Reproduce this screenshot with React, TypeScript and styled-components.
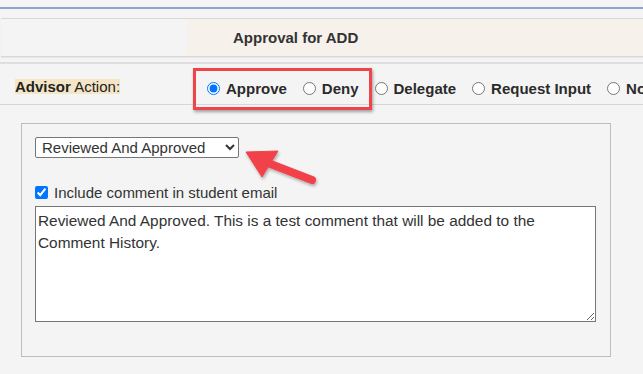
import styled, { createGlobalStyle } from 'styled-components';

const GlobalStyle = createGlobalStyle`
  html, body {
    margin: 0;
    padding: 0;
    background: #f4f4f4;
    font-family: "Liberation Sans", Arial, sans-serif;
    color: #333;
  }
`;

const Page = styled.div`
  position: relative;
  width: 643px;
  height: 374px;
  overflow: hidden;
  padding-top: 7px;
  box-sizing: border-box;
`;

const TopRule = styled.div`
  height: 2px;
  background: #8aa3d0;
`;

const HeaderBand = styled.div`
  margin: 9px 0 0 1px;
  height: 37px;
  display: grid;
  grid-template-columns: 186px 1fr;
  border-top: 1px solid #d8d8d8;
  border-bottom: 1px solid #d8d8d8;
  box-shadow: 0 1px 1px rgba(0, 0, 0, 0.05);
`;

const HeaderCell = styled.div<{ $tint?: boolean }>`
  display: flex;
  align-items: center;
  padding-left: ${p => (p.$tint ? '46px' : '0')};
  background: ${p => (p.$tint ? '#f6f1eb' : 'transparent')};
  font-weight: bold;
  font-size: 15px;
  color: #333;
`;

const Divider = styled.div`
  margin-top: 5px;
  height: 2px;
  background: #dedede;
`;

const ActionRow = styled.div`
  height: 41px;
  box-sizing: border-box;
  padding: 5px 0 0 15px;
  display: grid;
  grid-template-columns: 192px auto;
  align-items: center;
  border-bottom: 1px solid #d6d6d6;
`;

const ActionLabel = styled.span`
  justify-self: start;
  background: #f3e5c5;
  font-size: 15px;
  line-height: 15px;
  white-space: nowrap;
  color: #222;

  b {
    font-weight: bold;
  }
`;

const RadioGroup = styled.div`
  display: flex;
  align-items: center;
  gap: 16px;
  margin-top: 3px;
  white-space: nowrap;
`;

const RadioItem = styled.label`
  display: flex;
  align-items: center;
  gap: 6px;
  font-size: 15px;
  font-weight: bold;
  color: #2b2b2b;

  input {
    margin: 0;
    width: 13px;
    height: 13px;
    accent-color: #0075ff;
  }
`;

const Panel = styled.div`
  margin: 18px 0 0 21px;
  width: 590px;
  height: 234px;
  box-sizing: border-box;
  border: 1px solid #bdbdbd;
  padding: 13px 0 0 13px;
  display: flex;
  flex-direction: column;
  align-items: flex-start;
`;

const ReasonSelect = styled.select`
  width: 204px;
  height: 21px;
  font-family: "Liberation Sans", Arial, sans-serif;
  font-size: 15px;
  color: #333;
  background: #fff;
  border: 1px solid #767676;
  border-radius: 2px;
  padding: 0 2px;
`;

const CheckRow = styled.label`
  margin-top: 26px;
  display: flex;
  align-items: center;
  gap: 6px;
  font-size: 15px;
  color: #333;

  input {
    margin: 0;
    width: 13px;
    height: 13px;
    accent-color: #0075ff;
  }
`;

const Comment = styled.textarea`
  margin-top: 5px;
  width: 561px;
  height: 116px;
  box-sizing: border-box;
  border: 1px solid #767676;
  padding: 3px 2px;
  font-family: "Liberation Sans", Arial, sans-serif;
  font-size: 15.4px;
  line-height: 22px;
  color: #333;
  background: #fff;
`;

const HighlightBox = styled.div`
  position: absolute;
  left: 193px;
  top: 68px;
  width: 179px;
  height: 42px;
  box-sizing: border-box;
  border: 3px solid #f1434a;
  box-shadow: 1px 2px 3px rgba(0, 0, 0, 0.35);
  pointer-events: none;
`;

const ArrowLayer = styled.svg`
  position: absolute;
  left: 0;
  top: 0;
  pointer-events: none;
`;

export default function App() {
  return (
    <Page>
      <GlobalStyle />
      <TopRule />
      <HeaderBand>
        <HeaderCell />
        <HeaderCell $tint>Approval for ADD</HeaderCell>
      </HeaderBand>
      <Divider />
      <ActionRow>
        <ActionLabel>
          <b>Advisor</b> Action:
        </ActionLabel>
        <RadioGroup>
          <RadioItem>
            <input type="radio" name="action" defaultChecked />
            Approve
          </RadioItem>
          <RadioItem>
            <input type="radio" name="action" />
            Deny
          </RadioItem>
          <RadioItem>
            <input type="radio" name="action" />
            Delegate
          </RadioItem>
          <RadioItem>
            <input type="radio" name="action" />
            Request Input
          </RadioItem>
          <RadioItem>
            <input type="radio" name="action" />
            No Action
          </RadioItem>
        </RadioGroup>
      </ActionRow>
      <Panel>
        <ReasonSelect defaultValue="approved">
          <option value="approved">Reviewed And Approved</option>
        </ReasonSelect>
        <CheckRow>
          <input type="checkbox" defaultChecked />
          Include comment in student email
        </CheckRow>
        <Comment
          defaultValue="Reviewed And Approved. This is a test comment that will be added to the Comment History."
        />
      </Panel>

      <HighlightBox />
      <ArrowLayer width="643" height="374" viewBox="0 0 643 374">
        <defs>
          <filter id="shade" x="-20%" y="-20%" width="140%" height="160%">
            <feDropShadow dx="1" dy="2" stdDeviation="1.5" floodColor="#000" floodOpacity="0.3" />
          </filter>
        </defs>
        <g filter="url(#shade)" fill="#f1434a" stroke="#f1434a">
          <line x1="312" y1="180" x2="268" y2="163" strokeWidth="8" strokeLinecap="round" />
          <polygon points="246,152 278,151 262,177" strokeWidth="1" strokeLinejoin="round" />
        </g>
      </ArrowLayer>
    </Page>
  );
}
